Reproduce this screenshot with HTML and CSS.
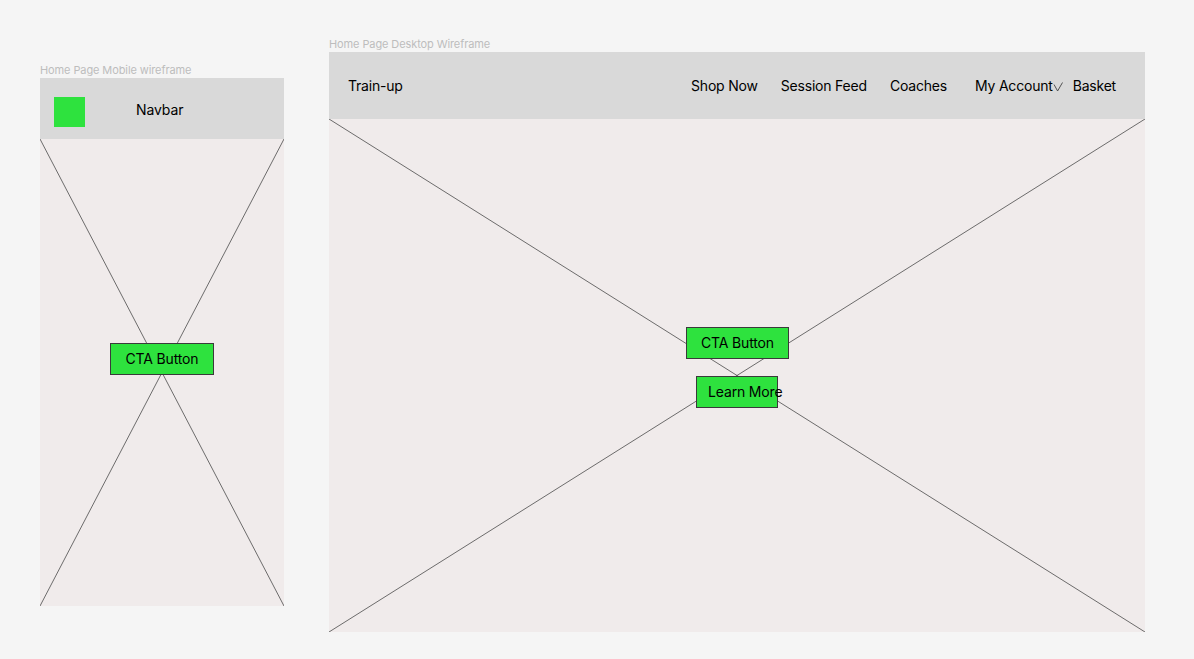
FILE: index.html
```html
<!DOCTYPE html>
<html lang="en">
<head>
<meta charset="utf-8">
<title>Wireframes</title>
<link rel="stylesheet" href="styles.css">
</head>
<body>
<div class="canvas">
  <section class="frame frame-mobile">
    <div class="frame-label">Home Page Mobile wireframe</div>
    <div class="m-nav">
      <div class="m-logo"></div>
      <span class="m-nav-text">Navbar</span>
    </div>
    <div class="body m-body">
      <svg class="cross" viewBox="0 0 244 467" preserveAspectRatio="none">
        <line x1="0" y1="0" x2="244" y2="467"/>
        <line x1="244" y1="0" x2="0" y2="467"/>
      </svg>
      <div class="btn m-cta">CTA Button</div>
    </div>
  </section>

  <section class="frame frame-desktop">
    <div class="frame-label">Home Page Desktop Wireframe</div>
    <div class="d-nav">
      <span class="brand">Train-up</span>
      <nav class="d-links">
        <span>Shop Now</span>
        <span>Session Feed</span>
        <span>Coaches</span>
        <span class="account">My Account<svg class="chev" viewBox="0 0 10 10" width="10" height="10"><polyline points="1,2.5 4.6,9 9.5,0.5"/></svg></span>
        <span class="basket">Basket</span>
      </nav>
    </div>
    <div class="body d-body">
      <svg class="cross" viewBox="0 0 816 513" preserveAspectRatio="none">
        <line x1="0" y1="0" x2="816" y2="513"/>
        <line x1="816" y1="0" x2="0" y2="513"/>
      </svg>
      <div class="btn d-cta">CTA Button</div>
      <div class="btn d-learn"><span>Learn More</span></div>
    </div>
  </section>
</div>
</body>
</html>
```

FILE: styles.css
```css
* { box-sizing: border-box; }
html, body {
  margin: 0;
  padding: 0;
  background: #f5f5f5;
  font-family: Inter, "Noto Sans", sans-serif;
  color: #000;
}
.canvas {
  position: relative;
  width: 1194px;
  height: 659px;
  overflow: hidden;
}
.frame {
  position: absolute;
  display: flex;
  flex-direction: column;
}
.frame-mobile { left: 40px; top: 78px; width: 244px; height: 528px; }
.frame-desktop { left: 329px; top: 52px; width: 816px; height: 580px; }
.frame-label {
  position: absolute;
  left: 0;
  top: -14px;
  font-size: 11px;
  line-height: 13px;
  color: #bdbdbd;
  white-space: nowrap;
  letter-spacing: -0.1px;
}
.m-nav {
  height: 61px;
  background: #d9d9d9;
  display: flex;
  align-items: flex-start;
  padding-left: 14px;
  flex: none;
}
.m-logo {
  width: 31px;
  height: 30px;
  background: #2ee23e;
  margin-top: 19px;
}
.m-nav-text {
  margin-left: 51px;
  font-size: 14px;
  line-height: 17px;
  margin-top: 23px;
  letter-spacing: -0.1px;
}
.body {
  position: relative;
  flex: 1;
  background: #f0ebeb;
}
.cross {
  position: absolute;
  inset: 0;
  width: 100%;
  height: 100%;
  display: block;
}
.cross line {
  stroke: #4a4a4a;
  stroke-width: 0.8;
  vector-effect: non-scaling-stroke;
}
.btn {
  position: absolute;
  background: #2ee23e;
  border: 1px solid #3a3a3a;
  font-size: 14px;
  letter-spacing: -0.15px;
  display: flex;
  align-items: center;
  justify-content: center;
  white-space: nowrap;
}
.m-cta { left: 70px; top: 204px; width: 104px; height: 32px; padding-bottom: 2px; }
.d-nav {
  height: 67px;
  background: #d9d9d9;
  display: flex;
  align-items: center;
  padding-left: 19px;
  font-size: 14px;
  letter-spacing: -0.2px;
  flex: none;
}
.brand { margin-right: auto; }
.d-links {
  display: flex;
  align-items: center;
  gap: 23px;
  padding-right: 29px;
}
.d-links .account { margin-left: 5px; display: flex; align-items: center; }
.chev {
  display: block;
  margin-left: 0;
  margin-top: 2px;
}
.chev polyline {
  fill: none;
  stroke: #444;
  stroke-width: 0.9;
}
.d-links .basket { margin-left: -13px; }
.d-cta { left: 357px; top: 208px; width: 103px; height: 32px; padding-bottom: 2px; }
.d-learn {
  left: 367px;
  top: 257px;
  width: 82px;
  height: 32px;
  padding-bottom: 2px;
  justify-content: flex-start;
  overflow: visible;
}
.d-learn span { margin-left: 11px; }
```
